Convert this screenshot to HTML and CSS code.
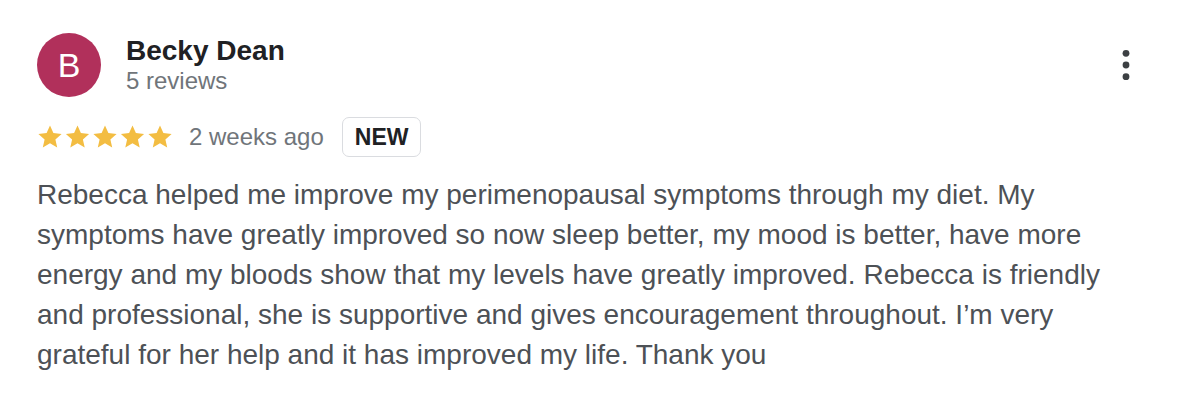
FILE: index.html
```html
<!DOCTYPE html>
<html lang="en">
<head>
<meta charset="utf-8">
<link rel="stylesheet" href="styles.css">
</head>
<body>
<div class="review">
  <div class="head">
    <div class="avatar">B</div>
    <div class="who">
      <div class="name">Becky Dean</div>
      <div class="count">5 reviews</div>
    </div>
    <div class="more" aria-label="More options">
      <svg width="24" height="36" viewBox="0 0 24 36"><circle cx="12" cy="6.3" r="3.4"/><circle cx="12" cy="18" r="3.4"/><circle cx="12" cy="29.7" r="3.4"/></svg>
    </div>
  </div>
  <div class="meta">
    <div class="stars">
      <svg width="136" height="26" viewBox="0 0 136 26">
        <defs><path id="st" d="M13 1.5l3.4 7.6 8.2.8-6.2 5.5 1.8 8.1L13 19.3l-7.2 4.2 1.8-8.1L1.4 9.9l8.2-.8z"/></defs>
        <use href="#st" x="0"/><use href="#st" x="27.5"/><use href="#st" x="55"/><use href="#st" x="82.5"/><use href="#st" x="110"/>
      </svg>
    </div>
    <span class="when">2 weeks ago</span>
    <span class="badge">NEW</span>
  </div>
  <p class="text">Rebecca helped me improve my perimenopausal symptoms through my diet. My symptoms have greatly improved so now sleep better, my mood is better, have more energy and my bloods show that my levels have greatly improved. Rebecca is friendly and professional, she is supportive and gives encouragement throughout. I’m very grateful for her help and it has improved my life. Thank you</p>
</div>
</body>
</html>
```
FILE: styles.css
```css
html, body {
  margin: 0;
  background: #fff;
}
body {
  font-family: "Liberation Sans", Arial, sans-serif;
}
.review {
  padding: 33px 50px 0 37px;
}
.head {
  display: flex;
  align-items: flex-start;
}
.avatar {
  width: 64px;
  height: 64px;
  border-radius: 50%;
  background: #b1305b;
  color: #fff;
  font-size: 34px;
  display: flex;
  align-items: center;
  justify-content: center;
  flex: none;
}
.who {
  margin-left: 25px;
  padding-top: 3px;
  flex: 1;
}
.name {
  font-weight: bold;
  font-size: 28px;
  line-height: 30px;
  color: #202124;
}
.count {
  font-size: 24px;
  line-height: 30px;
  color: #70757a;
}
.more {
  margin-top: 14px;
}
.more svg {
  display: block;
  fill: #3c4043;
}
.meta {
  display: flex;
  align-items: center;
  margin-top: 20px;
  height: 40px;
}
.stars svg {
  display: block;
  fill: #f3bd42;
}
.when {
  margin-left: 16px;
  font-size: 24px;
  color: #70757a;
}
.badge {
  margin-left: 18px;
  height: 40px;
  box-sizing: border-box;
  padding: 0 12px;
  border: 1.5px solid #dadce0;
  border-radius: 7px;
  font-weight: bold;
  font-size: 23px;
  color: #202124;
  display: flex;
  align-items: center;
}
.text {
  margin: 18px 0 0;
  font-size: 28px;
  line-height: 40px;
  color: #4d5156;
  max-width: 1090px;
}
```
